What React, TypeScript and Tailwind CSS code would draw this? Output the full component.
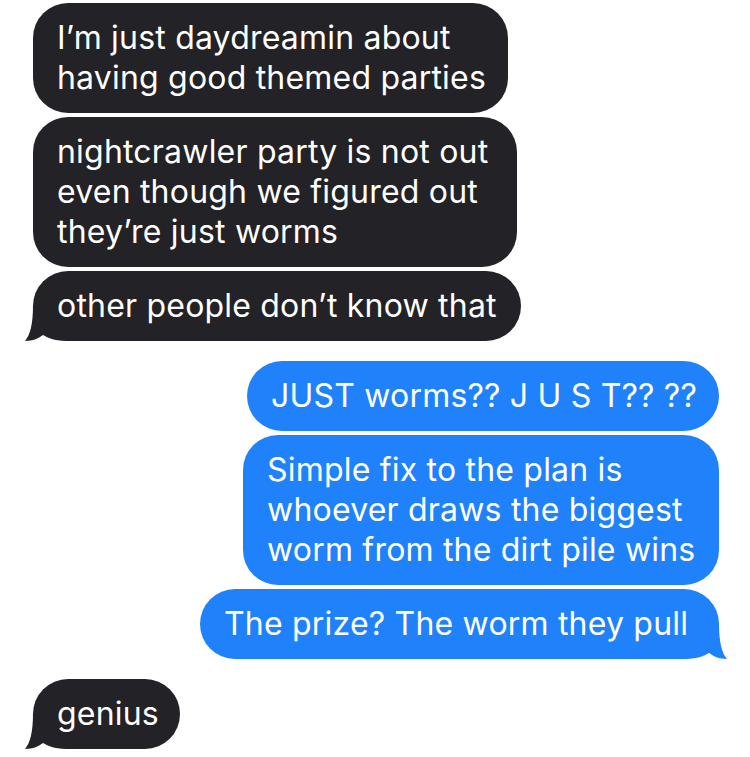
import React from "react";

const DARK = "#232226";
const BLUE = "#1f82fb";

function Tail({ side, color }: { side: "left" | "right"; color: string }) {
  const isLeft = side === "left";
  return (
    <svg
      width="44"
      height="36"
      viewBox="0 0 44 36"
      className={isLeft ? "absolute -left-[8px] bottom-0" : "absolute -right-[8px] bottom-0"}
      style={isLeft ? undefined : { transform: "scaleX(-1)" }}
    >
      <path
        d="M8 0 C8 20 5 30 0 36 C8 36 14 33 18 30 C23 33 30 36 44 36 L44 0 Z"
        fill={color}
      />
    </svg>
  );
}

function Bubble({
  lines,
  width,
  side,
  tail,
}: {
  lines: string[];
  width: string;
  side: "left" | "right";
  tail?: boolean;
}) {
  const color = side === "left" ? DARK : BLUE;
  return (
    <div
      className={`relative rounded-[35px] pl-[24px] py-[15px] text-[32px] leading-[40px] tracking-[0.2px] text-white ${width}`}
      style={{ backgroundColor: color }}
    >
      {tail && <Tail side={side} color={color} />}
      <div className="relative whitespace-nowrap">
        {lines.map((l, i) => (
          <div key={i}>{l}</div>
        ))}
      </div>
    </div>
  );
}

export default function App() {
  return (
    <div
      className="w-[750px] h-[757px] bg-white overflow-hidden"
      style={{ fontFamily: 'Inter, "Liberation Sans", Arial, sans-serif' }}
    >
      <div className="flex flex-col items-start pl-[33px] pt-[3px] gap-[4px]">
        <Bubble side="left" width="w-[475px]" lines={["I’m just daydreamin about", "having good themed parties"]} />
        <Bubble
          side="left"
          width="w-[484px]"
          lines={["nightcrawler party is not out", "even though we figured out", "they’re just worms"]}
        />
        <Bubble side="left" width="w-[488px]" tail lines={["other people don’t know that"]} />
      </div>
      <div className="flex flex-col items-end pr-[31px] pt-[20px] gap-[4px]">
        <Bubble side="right" width="w-[472px]" lines={["JUST worms?? J U S T?? ??"]} />
        <Bubble
          side="right"
          width="w-[476px]"
          lines={["Simple fix to the plan is", "whoever draws the biggest", "worm from the dirt pile wins"]}
        />
        <Bubble side="right" width="w-[519px]" tail lines={["The prize? The worm they pull"]} />
      </div>
      <div className="flex flex-col items-start pl-[33px] pt-[20px]">
        <Bubble side="left" width="w-[147px]" tail lines={["genius"]} />
      </div>
    </div>
  );
}
